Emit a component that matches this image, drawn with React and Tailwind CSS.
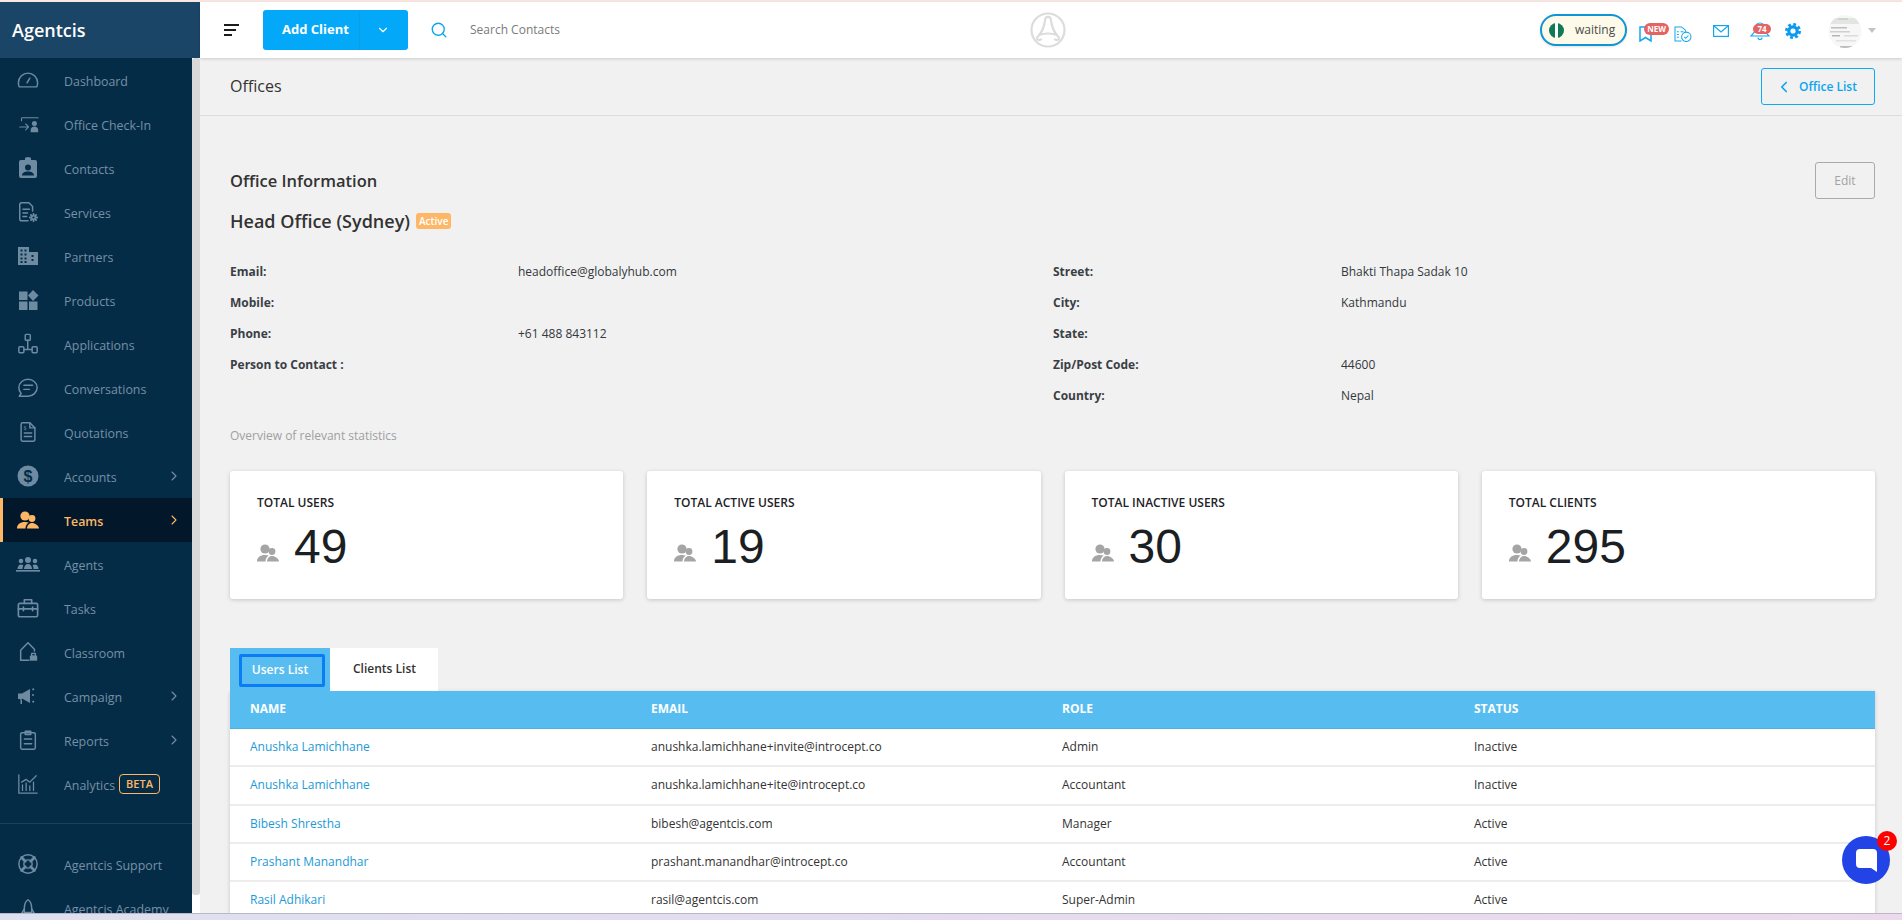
import React from "react";
import { ChevronRight, ChevronDown, ChevronLeft, Search } from "lucide-react";

const I = ({ children, w = 22, h = 22, vb = "0 0 24 24", fill = "none", stroke = "currentColor", sw = 1.6, cls = "" }) => (
  <svg width={w} height={h} viewBox={vb} fill={fill} stroke={stroke} strokeWidth={sw} strokeLinecap="round" strokeLinejoin="round" className={cls}>{children}</svg>
);

const TwoUsers = ({ w = 22, h = 18 }) => (
  <svg width={w} height={h} viewBox="0 0 22 18" fill="currentColor">
    <circle cx="8" cy="5" r="4.6" />
    <path d="M0 17.500c0-4 3-6.500 8-6.500 1.400 0 2.700.2 3.800.6C9.800 12.800 8.500 14.900 8.500 17.500z" />
    <circle cx="15" cy="7.500" r="3.400" />
    <path d="M10 17.500c0-3 2.200-5.500 5-5.500s7 2.500 7 5.500z" />
  </svg>
);

const icons = {
  Dashboard: <I><path d="M2.500 19.500h19c.6-1.200 1-2.700 1-4.500a10.500 10.500 0 0 0-21 0c0 1.800.4 3.300 1 4.500z" /><path d="M11 15l3-5" /></I>,
  "Office Check-In": <I w={20} h={20} cls="ml-[3px]" sw={1.3}><path d="M3 8V5.500a1 1 0 0 1 1-1h19" /><path d="M1 15.500h10M8 12l3.500 3.500L8 19" /><circle cx="18.500" cy="11.500" r="3" fill="currentColor" stroke="none" /><path d="M14 22v-3c0-2.500 2-4 4.500-4s4.500 1.500 4.500 4v3z" fill="currentColor" stroke="none" /></I>,
  Contacts: <svg width="22" height="22" viewBox="0 0 22 22" fill="currentColor"><path fillRule="evenodd" d="M4 3h4V1.500a3 1.500 0 0 1 6 0V3h4a2 2 0 0 1 2 2v14a2 2 0 0 1-2 2H4a2 2 0 0 1-2-2V5a2 2 0 0 1 2-2zm7 4.500a3 3 0 1 0 0 6 3 3 0 0 0 0-6zM5 18.500h12c0-2.500-2.500-4-6-4s-6 1.500-6 4z" /></svg>,
  Services: <I><path d="M12 21.500H5a2 2 0 0 1-2-2V4a2 2 0 0 1 2-2h8l4 4v5" /><path d="M6.500 9h7M6.500 13h5M6.500 17h4" /><circle cx="18" cy="18" r="2" /><path d="M18 14v1M18 21v1M14 18h1M21 18h1M15.200 15.200l.7.7M20.100 20.100l.7.7M15.200 20.800l.7-.7M20.100 15.900l.7-.7" strokeWidth="2" /></I>,
  Partners: <svg width="22" height="22" viewBox="0 0 22 22" fill="currentColor"><path fillRule="evenodd" d="M1 2h11v5h9v13H1zm2.500 2.500v2h2v-2zm4 0v2h2v-2zm-4 4v2h2v-2zm4 0v2h2v-2zm7 1.500v2h2v-2zm-11 2.500v2h2v-2zm4 0v2h2v-2zm7 1.500v2h2v-2zm-11 2v2h2v-2zm4 0v2h2v-2z" /></svg>,
  Products: <svg width="22" height="22" viewBox="0 0 22 22" fill="currentColor"><rect x="2" y="2.500" width="8.500" height="8.500" /><path d="M16 1l5.500 5.500L16 12l-5-5.500z" /><rect x="2" y="12.500" width="8.500" height="8.500" /><rect x="12" y="12.500" width="8.500" height="8.500" /></svg>,
  Applications: <I><rect x="9" y="1.500" width="5.500" height="6.500" rx="1" /><rect x="2" y="15" width="5.500" height="6.500" rx="1" /><rect x="16.500" y="15" width="5.500" height="6.500" rx="1" /><path d="M11.700 8v10M7.500 18h9" /></I>,
  Conversations: <I><path d="M12 2.500c5.500 0 10 4 10 9s-4.500 9.500-10 9.500H2.500l2-3c-1.600-1.700-2.500-4-2.500-6.500 0-5 4.500-9 10-9z" /><path d="M7.500 9h9.500M7.500 13.500h6" /></I>,
  Quotations: <I><path d="M14 2H6a1.500 1.500 0 0 0-1.500 1.500v17A1.500 1.500 0 0 0 6 22h12a1.500 1.500 0 0 0 1.500-1.500V7.500z" /><path d="M14 2v5.500h5.500M8 13h8M8 17h8" /><text x="7" y="10" fontSize="6" fill="currentColor" stroke="none">$</text></I>,
  Accounts: <svg width="22" height="22" viewBox="0 0 22 22"><circle cx="11" cy="11" r="10.500" fill="currentColor" /><text x="11" y="17" textAnchor="middle" fontSize="16" fontWeight="700" fill="#052c47" fontFamily="Liberation Sans">$</text></svg>,
  Teams: <TwoUsers w={22} h={18} />,
  Agents: <svg width="24" height="16" viewBox="0 0 24 16" fill="currentColor"><circle cx="12" cy="4" r="3" /><circle cx="5" cy="5" r="2.300" /><circle cx="19" cy="5" r="2.300" /><path d="M8 13c0-3 1.800-5 4-5s4 2 4 5zM1.500 13c0-2.500 1.500-4.500 3.500-4.500 1 0 1.800.4 2.300 1-.5 1-.8 2.200-.8 3.500zM22.500 13c0-2.500-1.500-4.500-3.500-4.500-1 0-1.800.4-2.300 1 .5 1 .8 2.200.8 3.500z" /><rect x="0" y="14" width="24" height="1.600" /></svg>,
  Tasks: <I sw={1.8}><rect x="1.500" y="7" width="21" height="14.500" rx="1.500" /><path d="M8 7V3h8v4M1.500 13h21M7 11v4M17 11v4" /></I>,
  Classroom: <I><path d="M4 21V10l8-8 7 7v2" /><path d="M4 21h9" /><rect x="14" y="16" width="8" height="5.500" fill="currentColor" stroke="none" /><rect x="16" y="13.500" width="4" height="3" /></I>,
  Campaign: <svg width="22" height="22" viewBox="0 0 22 22" fill="currentColor"><path d="M1 8.500h4L13 4v14l-8-4.500v1H3.500v4.500h2.500l-1 0v-4H3v-1H1z" /><path d="M15 10h3M15.500 5l2-2M15.500 16l2 2" fill="none" stroke="currentColor" strokeWidth="1.700" strokeDasharray="2 1" /></svg>,
  Reports: <I><rect x="4" y="4" width="16" height="18" rx="1.500" /><path d="M9 2.500h6V6H9zM8 11h8M8 16h8" /></I>,
  Analytics: <I><path d="M2 2v20h20" strokeWidth="1.400" /><path d="M6 19v-6M10 19v-8M14 19v-5M18 19v-9M5 10l5-3 4 3 7-7" strokeWidth="1.400" /></I>,
  "Agentcis Support": <I><circle cx="12" cy="12" r="10" /><circle cx="12" cy="12" r="4.500" /><path d="M5 5l4 4M19 5l-4 4M5 19l4-4M19 19l-4-4" strokeWidth="3" /></I>,
  "Agentcis Academy": <I><path d="M12 3c3 2 4 5 4 9v5H8v-5c0-4 1-7 4-9z" /><path d="M8 13l-3 5h3M16 13l3 5h-3" /></I>,
};

const side = [
  ["Dashboard"], ["Office Check-In"], ["Contacts"], ["Services"], ["Partners"], ["Products"], ["Applications"], ["Conversations"], ["Quotations"],
  ["Accounts", "arrow"], ["Teams", "active"], ["Agents"], ["Tasks"], ["Classroom"], ["Campaign", "arrow"], ["Reports", "arrow"], ["Analytics", "beta"],
];

const NavItem = ({ label, kind }) => {
  const active = kind === "active";
  return (
    <div className={`flex h-11 shrink-0 items-center border-l-[3px] ${active ? "border-[#fdb766] bg-[#02182a] text-[#fdb766]" : "border-transparent text-[#7590a5]"}`}>
      <span className={`flex w-[61px] shrink-0 items-center justify-center pr-[12px] ${active ? "" : "text-[#6e8ba2]"}`}>{icons[label]}</span>
      <span className={`mt-[4px] text-[12.4px] leading-none ${active ? "font-semibold" : ""}`}>{label}</span>
      {kind === "beta" && (
        <span className="ml-[4px] flex h-5 w-[41px] items-center justify-center rounded-sm border border-[#fdb766] text-[11px] font-semibold text-[#fdb766]">BETA</span>
      )}
      {(kind === "arrow" || active) && (
        <ChevronRight size={16} strokeWidth={1.6} className={`ml-auto mr-[10px] ${active ? "text-[#fdb766]" : "text-[#7590a5]"}`} />
      )}
    </div>
  );
};

const InfoRow = ({ label, value }) => (
  <div className="flex h-[31.2px] items-center text-xs">
    <span className="w-[288px] shrink-0 font-bold text-[#3a3f45]">{label}</span>
    <span className="text-[#33383d]">{value}</span>
  </div>
);

const Stat = ({ label, value }) => (
  <div className="flex h-[128px] flex-1 flex-col rounded-[3px] bg-white pl-[27px] pt-6 shadow-[0_1px_4px_rgba(0,0,0,0.18)]">
    <div className="text-xs font-semibold leading-4 text-[#1d2226]">{label}</div>
    <div className="mt-2 flex items-center gap-[15px]">
      <span className="mt-[12px] text-[#a5a5a5]"><TwoUsers /></span>
      <span className="text-[48px] leading-[56px] text-[#1b1f23] [font-family:'Liberation_Sans',sans-serif]">{value}</span>
    </div>
  </div>
);

const users = [
  ["Anushka Lamichhane", "anushka.lamichhane+invite@introcept.co", "Admin", "Inactive", "h-[38px]"],
  ["Anushka Lamichhane", "anushka.lamichhane+ite@introcept.co", "Accountant", "Inactive", "h-[39px]"],
  ["Bibesh Shrestha", "bibesh@agentcis.com", "Manager", "Active", "h-[38px]"],
  ["Prashant Manandhar", "prashant.manandhar@introcept.co", "Accountant", "Active", "h-[38px]"],
  ["Rasil Adhikari", "rasil@agentcis.com", "Super-Admin", "Active", "h-[38px]"],
];

export default function App() {
  return (
    <div className="flex h-screen w-full flex-col overflow-hidden bg-[#f1f1f1] text-[#333] [font-family:'Open_Sans',sans-serif]">
      <div className="h-[2px] shrink-0 bg-[#f9e7e3]" />
      <div className="flex min-h-0 flex-1">
        {/* sidebar */}
        <aside className="flex w-[200px] shrink-0 flex-col">
          <div className="flex h-[56px] shrink-0 items-center bg-[#1b4566] pl-3 text-lg font-semibold text-white">Agentcis</div>
          <div className="flex min-h-0 flex-1 bg-white">
            <div className="flex h-full w-[192px] shrink-0 flex-col overflow-hidden bg-[#052c47]">
              {side.map(([l, k]) => <NavItem key={l} label={l} kind={k} />)}
              <div className="mb-[18px] mt-[17px] h-px shrink-0 bg-[#1c415c]" />
              <NavItem label="Agentcis Support" />
              <NavItem label="Agentcis Academy" />
            </div>
            <div className="mb-[18px] w-2 rounded-[3px] bg-[#d8d8d8]" />
          </div>
        </aside>

        {/* main */}
        <div className="flex min-w-0 flex-1 flex-col">
          <header className="z-10 flex h-[56px] shrink-0 items-center bg-white shadow-[0_1px_3px_rgba(0,0,0,0.16)]">
            <svg width="16" height="12" viewBox="0 0 16 12" className="ml-6" fill="none" stroke="#1c1c1c" strokeWidth="2"><path d="M0 1h15M0 6h12M0 11h8" /></svg>
            <div className="ml-[23px] flex h-10 w-[145px] items-center rounded-[3px] bg-[#03a9f8] text-[13px] font-bold text-white">
              <span className="w-[96px] pl-[19px]">Add Client</span>
              <span className="flex h-full flex-1 items-center justify-center border-l border-[#0a9fe8]"><ChevronDown size={14} className="mr-[2px]" /></span>
            </div>
            <Search size={18} strokeWidth={1.8} className="ml-[22px] text-[#0ba5ec]" />
            <span className="ml-[22px] text-xs text-[#7a7a7a]">Search Contacts</span>
            <svg width="36" height="36" viewBox="0 0 36 36" className="ml-[470px]" fill="none" stroke="#dcdcdc" strokeWidth="2.200" strokeLinecap="round">
              <circle cx="18" cy="18" r="16.500" />
              <path d="M15 9C14 15 10.500 22 7.500 25c-1.500 1.500 1 4.500 3.500 2.500M21 9c1 6 4.500 13 7.500 16 1.500 1.500-1 4.500-3.500 2.500M15 9C14 3.500 22 3.500 21 9M9 23c5-2 13-2 18 0" />
            </svg>
            <div className="ml-auto flex items-center">
              <div className="flex h-8 w-[87px] items-center rounded-full border-2 border-[#0d96d6] bg-[#fdfae9] pl-[7px] shadow-sm">
                <span className="relative h-[15px] w-[15px] rounded-full bg-[#0f7a53]">
                  <span className="absolute left-[6px] top-0 h-full w-[3px] bg-white" />
                </span>
                <span className="ml-[11px] text-xs text-[#4a4a4a]">waiting</span>
              </div>
              <div className="relative ml-3 mt-2 flex h-4 w-[13px] items-end text-[#14a7f1]">
                <svg width="13" height="16" viewBox="0 0 13 16" fill="none" stroke="currentColor" strokeWidth="1.500"><path d="M1 1h11v14l-5.500-3.500L1 15z" /></svg>
                <span className="absolute -top-[3px] left-[5px] flex h-3 w-[25px] items-center justify-center rounded-full bg-[#e46363] text-[8px] font-bold leading-none text-white">NEW</span>
              </div>
              <svg width="18" height="16" viewBox="0 0 19 17" className="ml-[22px] mt-2" fill="none" stroke="#14a7f1" strokeWidth="1.100"><path d="M8 16H1V1h7l4 3.500V7" /><path d="M3 6h2M7 6h3M3 9h2M3 12h2" /><circle cx="13" cy="11.500" r="5" /><path d="M10.800 11.500l1.600 1.600 2.800-3" /></svg>
              <svg width="16" height="12" viewBox="0 0 16 12" className="ml-[21px] mt-[2px]" fill="none" stroke="#14a7f1" strokeWidth="1.200"><rect x=".6" y=".6" width="14.800" height="10.800" /><path d="M1 1l7 6 7-6" /></svg>
              <div className="relative ml-[21px] mt-[2px] h-[18px] w-[21px] text-[#14a7f1]">
                <svg width="20" height="18" viewBox="0 0 20 18" fill="none" stroke="currentColor" strokeWidth="1.200"><path d="M10 1c3 0 4.500 2.500 4.500 5.500 0 3 2.500 5.500 4.500 7.500H1c2-2 4.500-4.500 4.500-7.500C5.500 3.500 7 1 10 1z" /><path d="M8 15.500a2 2 0 0 0 4 0" /></svg>
                <span className="absolute left-[3px] top-[2px] flex h-[10px] w-[18px] items-center justify-center rounded-full bg-[#e46363] text-[8px] font-bold leading-none text-white">74</span>
              </div>
              <svg width="16" height="16" viewBox="0 0 16 16" className="ml-[14px] mt-[2px]" fill="none" stroke="#0a9bf0">
                <circle cx="8" cy="8" r="4.200" strokeWidth="3.200" />
                <circle cx="8" cy="8" r="6.600" strokeWidth="2.800" strokeDasharray="2.900 2.280" />
              </svg>
              <svg width="34" height="33" viewBox="0 0 34 33" className="ml-[27px] mt-[3px]">
                <defs><clipPath id="av"><circle cx="17" cy="16.500" r="16.500" /></clipPath></defs>
                <g clipPath="url(#av)">
                  <rect width="34" height="33" fill="#f7f7f7" />
                  <rect y="3" width="34" height="6" fill="#e4e4e4" />
                  <rect x="10" y="3" width="10" height="2" fill="#c9d8c9" />
                  <rect x="3" y="12" width="16" height="1.500" fill="#bdbdbd" />
                  <rect x="2" y="16" width="20" height="1.500" fill="#cfcfcf" />
                  <rect x="4" y="20" width="8" height="1.500" fill="#b5b5b5" />
                  <rect x="16" y="20" width="14" height="1.500" fill="#dcdcdc" />
                  <rect x="8" y="25" width="20" height="1.500" fill="#e2e2e2" />
                  <rect x="12" y="31" width="12" height="2" fill="#bdbdbd" />
                </g>
              </svg>
              <span className="ml-[6px] mr-[26px] h-0 w-0 border-x-4 border-t-[5px] border-x-transparent border-t-[#c4c4c4]" />
            </div>
          </header>

          <div className="relative min-h-0 flex-1 overflow-hidden">
            <div className="flex h-[58px] items-center justify-between border-b border-[#dcdcdc] pl-[30px] pr-[27px]">
              <h1 className="mb-[2px] text-base font-normal text-[#333]">Offices</h1>
              <button className="flex h-[37px] w-[114px] items-center justify-center gap-[6px] rounded-[3px] border border-[#0aabf5] text-xs font-semibold text-[#0aa5f0]">
                <ChevronLeft size={18} strokeWidth={2.2} className="-ml-[4px]" />Office List
              </button>
            </div>

            <div className="pl-[30px] pr-[27px]">
              <div className="mt-[46px] flex h-[37px] items-center justify-between">
                <h2 className="mt-[2px] text-[16.5px] font-semibold text-[#333]">Office Information</h2>
                <button className="flex h-[37px] w-[60px] items-center justify-center rounded-[3px] border border-[#aaa] text-xs text-[#a3a3a3]">Edit</button>
              </div>
              <div className="mt-2 flex h-[28px] items-center gap-[6px]">
                <h3 className="text-lg font-semibold text-[#333]">Head Office (Sydney)</h3>
                <span className="rounded-[3px] bg-[#fdb766] px-[3px] text-[10px] font-semibold leading-4 text-white">Active</span>
              </div>

              <div className="mt-[21px] flex">
                <div className="w-[823px] shrink-0">
                  <InfoRow label="Email:" value="headoffice@globalyhub.com" />
                  <InfoRow label="Mobile:" value="" />
                  <InfoRow label="Phone:" value="+61 488 843112" />
                  <InfoRow label="Person to Contact :" value="" />
                </div>
                <div className="flex-1">
                  <InfoRow label="Street:" value="Bhakti Thapa Sadak 10" />
                  <InfoRow label="City:" value="Kathmandu" />
                  <InfoRow label="State:" value="" />
                  <InfoRow label="Zip/Post Code:" value="44600" />
                  <InfoRow label="Country:" value="Nepal" />
                </div>
              </div>

              <p className="mt-4 text-xs leading-4 text-[#a0a0a0]">Overview of relevant statistics</p>

              <div className="mt-[27px] flex gap-6">
                <Stat label="TOTAL USERS" value="49" />
                <Stat label="TOTAL ACTIVE USERS" value="19" />
                <Stat label="TOTAL INACTIVE USERS" value="30" />
                <Stat label="TOTAL CLIENTS" value="295" />
              </div>

              <div className="mt-[49px] flex h-[43px] text-xs">
                <div className="flex w-[100px] bg-[#57bdf0] pl-[9px] pt-[6px]">
                  <div className="flex h-[33px] w-[86px] items-center justify-center rounded-[2px] border-[3px] border-[#0a7cf5] pr-[4px] font-semibold text-white">Users List</div>
                </div>
                <div className="flex w-[108px] items-center justify-center bg-white pl-px font-semibold text-[#333]">Clients List</div>
              </div>

              <div className="bg-white shadow-[0_1px_4px_rgba(0,0,0,0.18)]">
                <div className="flex h-[38px] items-center border-b border-[#4fb0e0] bg-[#57bdf0] pl-5 text-xs font-bold text-white">
                  <span className="w-[401px]">NAME</span>
                  <span className="w-[411px]">EMAIL</span>
                  <span className="w-[412px]">ROLE</span>
                  <span>STATUS</span>
                </div>
                {users.map((u, i) => (
                  <div key={i} className={`flex ${u[4]} items-center border-b-2 border-[#ececec] pl-5 text-xs text-[#333]`}>
                    <span className="w-[401px] text-[#1c9ad6]">{u[0]}</span>
                    <span className="w-[411px]">{u[1]}</span>
                    <span className="w-[412px]">{u[2]}</span>
                    <span>{u[3]}</span>
                  </div>
                ))}
              </div>
            </div>

            <div className="absolute bottom-[29px] right-[12px] flex h-12 w-12 items-center justify-center rounded-full bg-[#2243e6]">
              <svg width="21" height="23" viewBox="0 0 21 23" fill="white"><path d="M4 0h13a4 4 0 0 1 4 4v19l-6-4H4a4 4 0 0 1-4-4V4a4 4 0 0 1 4-4z" /></svg>
              <span className="absolute -right-[7px] -top-[5px] flex h-5 w-5 items-center justify-center rounded-full bg-[#ff0000] text-xs text-white">2</span>
            </div>
          </div>
        </div>
      </div>
      <div className="h-[7px] shrink-0 border-t border-[#b9b9c6] bg-gradient-to-r from-[#dde0f0] via-[#e4dcee] to-[#ecd9ec]" />
    </div>
  );
}
